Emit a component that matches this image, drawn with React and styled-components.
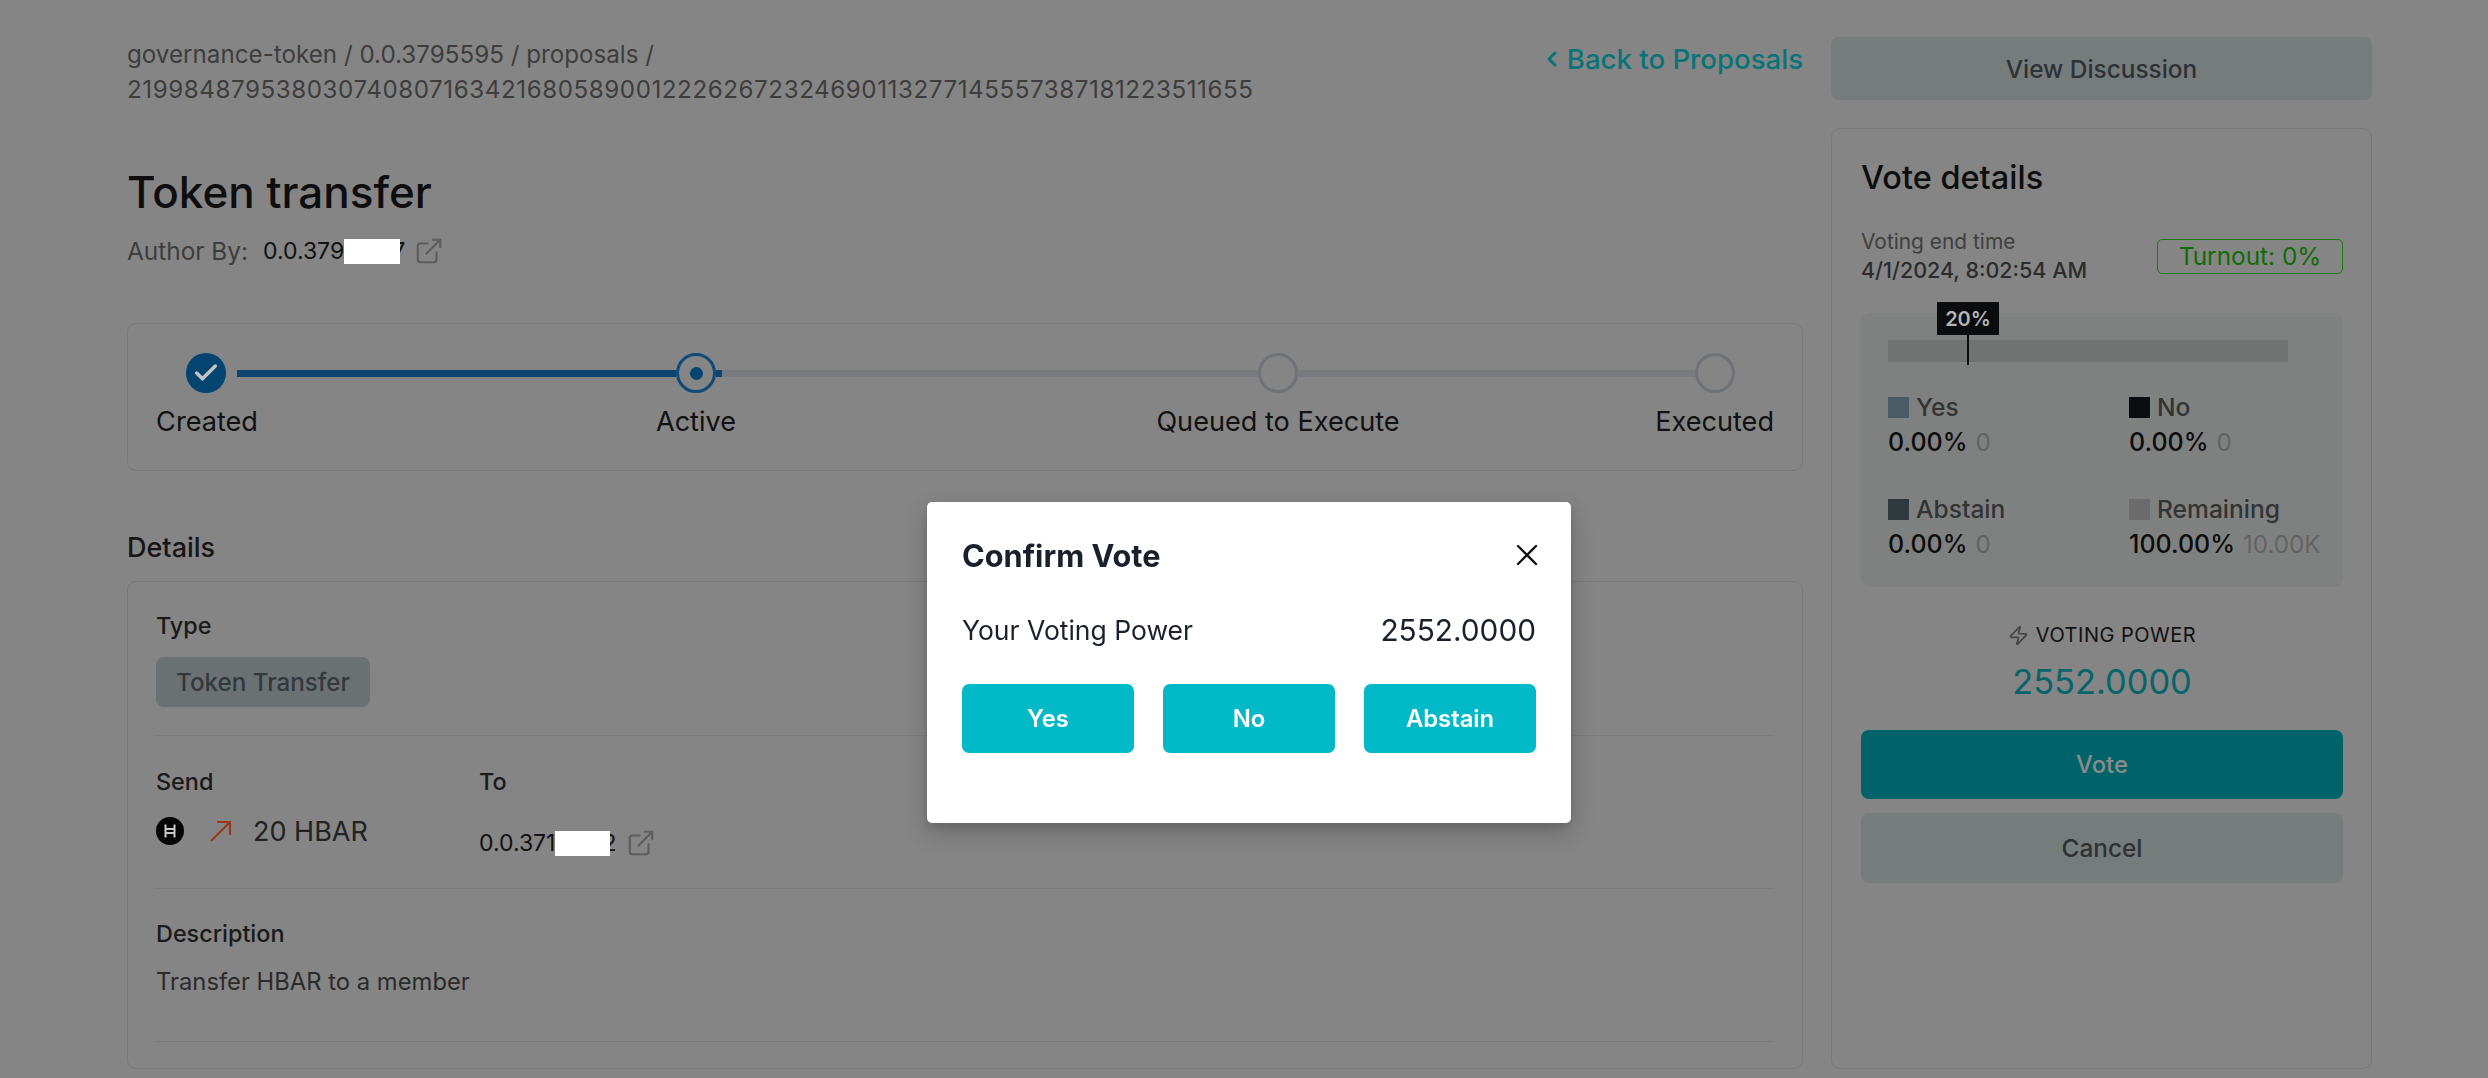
import React from 'react'
import styled, { createGlobalStyle } from 'styled-components'
import { ChevronLeft, ExternalLink, Zap, X, Check } from 'lucide-react'

const GlobalStyle = createGlobalStyle`
  * { box-sizing: border-box; }
  html, body { margin: 0; padding: 0; height: 100%; overflow: hidden; }
  body { background: #858585; font-family: Inter, "Liberation Sans", sans-serif; color: #111; }
`

const Page = styled.div`
  display: flex;
  align-items: flex-start;
  gap: 28px;
  width: 2488px;
  height: 1078px;
  padding: 37px 116px 0 127px;
  overflow: hidden;
`
const Main = styled.main`
  width: 1676px;
  flex: none;
`
const Side = styled.aside`
  width: 541px;
  flex: none;
`
const TopRow = styled.div`
  display: flex;
  justify-content: space-between;
  align-items: flex-start;
`
const Breadcrumb = styled.div`
  width: 1300px;
  font-size: 24.2px;
  line-height: 35px;
  color: #3d3d3d;
  word-break: break-word;
`
const ProposalId = styled.span`
  letter-spacing: 0.55px;
`
const BackLink = styled.a`
  display: flex;
  align-items: center;
  gap: 3px;
  height: 44px;
  font-size: 27.6px;
  font-weight: 500;
  color: #08747a;
`
const Title = styled.h1`
  margin: 57px 0 0;
  font-size: 44px;
  font-weight: 500;
  line-height: 56px;
  color: #0e0e0e;
`
const AuthorRow = styled.div`
  display: flex;
  align-items: center;
  margin-top: 16px;
  height: 30px;
  font-size: 24.4px;
  color: #3d3d3d;
`
const Address = styled.span`
  display: inline-flex;
  align-items: center;
  font-size: 23px;
  color: #111;
  margin-left: ${p => p.$gap || 0}px;
`
const Redacted = styled.span`
  display: inline-block;
  width: ${p => p.$w}px;
  height: 25px;
  margin-right: -8px;
  background: #fff;
  position: relative;
`
const LinkIcon = styled(ExternalLink)`
  margin-left: 9px;
  color: #5d5d5d;
`

const Stepper = styled.section`
  margin-top: 57px;
  height: 148px;
  padding: 29px 28px 0;
  border: 1px solid #797979;
  border-radius: 9px;
`
const Track = styled.div`
  display: flex;
  align-items: center;
  height: 40px;
  padding-left: 30px;
`
const Done = styled.span`
  display: flex;
  align-items: center;
  justify-content: center;
  flex: none;
  width: 40px;
  height: 40px;
  border-radius: 50%;
  background: #034470;
  color: #c4c4c4;
`
const Node = styled.span`
  display: flex;
  align-items: center;
  justify-content: center;
  flex: none;
  width: 40px;
  height: 40px;
  border-radius: 50%;
  border: 3px solid ${p => (p.$active ? '#104a7a' : '#6f7277')};
  i {
    width: 13px;
    height: 13px;
    border-radius: 50%;
    background: #034470;
  }
`
const Line = styled.span`
  flex: none;
  width: ${p => p.$w}px;
  height: 7px;
  margin-left: ${p => p.$ml || 0}px;
  background: ${p => (p.$on ? '#104470' : '#797b81')};
`
const StepLabels = styled.div`
  display: grid;
  grid-template-columns: 102px 876px 288px 1fr;
  margin-top: 14px;
  font-size: 27.1px;
  line-height: 30px;
  color: #111;
  text-align: center;
  span:last-child { text-align: right; }
`
const SectionTitle = styled.h2`
  margin: 60px 0 16px;
  font-size: 27px;
  font-weight: 500;
  line-height: 34px;
  color: #161616;
`
const Card = styled.section`
  height: 488px;
  padding: 29px 28px 0;
  border: 1px solid #797979;
  border-radius: 9px;
`
const FieldLabel = styled.div`
  font-size: 23.4px;
  font-weight: 500;
  line-height: 30px;
  color: #1a1a1a;
`
const Pill = styled.div`
  display: inline-flex;
  align-items: center;
  justify-content: center;
  width: 214px;
  height: 50px;
  margin-top: 16px;
  border-radius: 8px;
  background: #6b7172;
  font-size: 24.2px;
  font-weight: 500;
  color: #33383c;
`
const Divider = styled.hr`
  margin: ${p => p.$top}px 0 ${p => p.$bottom}px;
  border: 0;
  border-top: 1px solid #7b7b7b;
`
const TransferRow = styled.div`
  display: grid;
  grid-template-columns: 323px 1fr;
`
const SendValue = styled.div`
  display: flex;
  align-items: center;
  height: 34px;
  margin-top: 17px;
  font-size: 27px;
  color: #222;
`
const HbarIcon = styled.svg`
  flex: none;
`
const ArrowIcon = styled.svg`
  margin: 0 21px 0 26px;
`
const ToValue = styled.div`
  display: flex;
  align-items: center;
  height: 30px;
  margin-top: 31px;
  font-size: 23px;
  color: #111;
`
const BodyText = styled.p`
  margin: 18px 0 0;
  font-size: 23.8px;
  line-height: 30px;
  color: #2b2b2b;
`

const GhostButton = styled.button`
  display: block;
  width: 100%;
  height: ${p => p.$h}px;
  border: 0;
  border-radius: 8px;
  background: #767b7b;
  font-family: inherit;
  font-size: 24.4px;
  font-weight: 500;
  color: #2d3237;
`
const VoteCard = styled.section`
  height: 941px;
  margin-top: 28px;
  padding: 29px 28px 0 29px;
  border: 1px solid #797979;
  border-radius: 9px;
`
const VoteTitle = styled.h2`
  margin: 0;
  font-size: 32.5px;
  font-weight: 500;
  line-height: 40px;
  color: #0e0e0e;
`
const TimeRow = styled.div`
  display: flex;
  justify-content: space-between;
  align-items: center;
  margin-top: 30px;
`
const TimeCaption = styled.div`
  font-size: 20.9px;
  line-height: 28px;
  color: #3f3f3f;
`
const TimeValue = styled(TimeCaption)`
  font-size: 21.5px;
  font-weight: 500;
  color: #2c2c2c;
`
const Turnout = styled.div`
  display: flex;
  align-items: center;
  justify-content: center;
  width: 186px;
  height: 35px;
  border: 1px solid #1c7a10;
  border-radius: 5px;
  font-size: 24.4px;
  color: #0f6c03;
`
const StatsBox = styled.div`
  position: relative;
  height: 274px;
  margin-top: 29px;
  padding: 27px 27px 0;
  border-radius: 9px;
  background: #7f8180;
`
const Bar = styled.div`
  width: 400px;
  height: 22px;
  background: #707372;
`
const Marker = styled.div`
  position: absolute;
  left: 76px;
  top: -11px;
  width: 62px;
  height: 33px;
  display: flex;
  align-items: center;
  justify-content: center;
  background: #0a0c0d;
  font-size: 20px;
  font-weight: 600;
  color: #b5b5b5;
  &::after {
    content: '';
    position: absolute;
    left: 30px;
    top: 33px;
    width: 2px;
    height: 30px;
    background: #0a0c0d;
  }
`
const Legend = styled.div`
  display: grid;
  grid-template-columns: 241px 1fr;
  row-gap: 36px;
  margin-top: 30px;
`
const LegendLabel = styled.div`
  display: flex;
  align-items: center;
  gap: 7px;
  font-size: 24.6px;
  font-weight: 500;
  line-height: 30px;
  color: #333;
`
const Swatch = styled.span`
  width: 21px;
  height: 21px;
  background: ${p => p.$color};
`
const LegendValue = styled.div`
  margin-top: 5px;
  font-size: 25px;
  font-weight: 500;
  line-height: 30px;
  color: #0c0c0c;
  small {
    margin-left: 8px;
    font-size: 24.2px;
    font-weight: 400;
    color: #636363;
  }
`
const PowerLabel = styled.div`
  display: flex;
  align-items: center;
  justify-content: center;
  gap: 7px;
  margin-top: 33px;
  font-size: 20px;
  line-height: 30px;
  letter-spacing: 0.5px;
  color: #111;
  svg { color: #454545; }
`
const PowerValue = styled.div`
  margin: 10px 0 26px;
  font-size: 34.4px;
  line-height: 44px;
  text-align: center;
  color: #06646a;
`
const VoteButton = styled.button`
  display: block;
  width: 100%;
  height: 69px;
  margin-bottom: 14px;
  border: 0;
  border-radius: 8px;
  background: #006369;
  font-family: inherit;
  font-size: 23.8px;
  font-weight: 500;
  color: #8b8b8b;
`

const Backdrop = styled.div`
  position: fixed;
  inset: 0;
  display: flex;
  justify-content: center;
  align-items: flex-start;
  padding: 502px 0 0 10px;
`
const Modal = styled.div`
  width: 644px;
  height: 321px;
  padding: 33px 35px 0 35px;
  border-radius: 5px;
  background: #fff;
  box-shadow: 0 10px 24px rgba(0, 0, 0, 0.2), 0 4px 8px rgba(0, 0, 0, 0.1);
`
const ModalHeader = styled.div`
  display: flex;
  justify-content: space-between;
  align-items: center;
  height: 40px;
  font-size: 30.7px;
  font-weight: 700;
  color: #1a202c;
`
const CloseIcon = styled(X)`
  margin-right: -9px;
  color: #111;
`
const PowerRow = styled.div`
  display: flex;
  justify-content: space-between;
  align-items: center;
  height: 36px;
  margin-top: 37px;
  font-size: 26.5px;
  color: #1a202c;
  span:last-child { font-size: 29.8px; }
`
const ChoiceRow = styled.div`
  display: grid;
  grid-template-columns: repeat(3, 172px);
  justify-content: space-between;
  margin-top: 36px;
`
const ChoiceButton = styled.button`
  height: 69px;
  border: 0;
  border-radius: 7px;
  background: #02b9c8;
  font-family: inherit;
  font-size: 23.8px;
  font-weight: 600;
  color: #fff;
`

const legend = [
  { name: 'Yes', color: '#4a5b66', pct: '0.00%', count: '0' },
  { name: 'No', color: '#0b0e10', pct: '0.00%', count: '0' },
  { name: 'Abstain', color: '#2e383d', pct: '0.00%', count: '0' },
  { name: 'Remaining', color: '#6b6b6b', pct: '100.00%', count: '10.00K' },
]

function HbarLogo() {
  return (
    <HbarIcon width="28" height="28" viewBox="0 0 28 28">
      <circle cx="14" cy="14" r="14" fill="#050505" />
      <path d="M9.5 7.5v13M18.5 7.5v13M9.5 12h9M9.5 16h9" stroke="#c9c9c9" strokeWidth="2" fill="none" />
    </HbarIcon>
  )
}

export default function App() {
  return (
    <>
      <GlobalStyle />
      <Page>
        <Main>
          <TopRow>
            <Breadcrumb>
              governance-token / 0.0.3795595 / proposals /<br />
              <ProposalId>21998487953803074080716342168058900122262672324690113277145557387181223511655</ProposalId>
            </Breadcrumb>
            <BackLink>
              <ChevronLeft size={24} strokeWidth={3} />
              Back to Proposals
            </BackLink>
          </TopRow>
          <Title>Token transfer</Title>
          <AuthorRow>
            Author By:
            <Address $gap={15}>
              0.0.379
              <Redacted $w={56} />
              7
            </Address>
            <LinkIcon size={30} strokeWidth={1.7} />
          </AuthorRow>

          <Stepper>
            <Track>
              <Done><Check size={28} strokeWidth={3} /></Done>
              <Line $on $w={439} $ml={11} />
              <Node $active><i /></Node>
              <Line $on $w={6} />
              <Line $w={536} />
              <Node />
              <Line $w={397} />
              <Node />
            </Track>
            <StepLabels>
              <span>Created</span>
              <span>Active</span>
              <span>Queued to Execute</span>
              <span>Executed</span>
            </StepLabels>
          </Stepper>

          <SectionTitle>Details</SectionTitle>
          <Card>
            <FieldLabel>Type</FieldLabel>
            <Pill>Token Transfer</Pill>
            <Divider $top={28} $bottom={31} />
            <TransferRow>
              <div>
                <FieldLabel>Send</FieldLabel>
                <SendValue>
                  <HbarLogo />
                  <ArrowIcon width="22" height="22" viewBox="0 0 22 22" fill="none" stroke="#98391f" strokeWidth="2.2">
                    <path d="M1 21 20 2M7 2h13v13" />
                  </ArrowIcon>
                  20 HBAR
                </SendValue>
              </div>
              <div>
                <FieldLabel>To</FieldLabel>
                <ToValue>
                  0.0.371
                  <Redacted $w={55} />
                  2
                  <LinkIcon size={30} strokeWidth={1.7} />
                </ToValue>
              </div>
            </TransferRow>
            <Divider $top={30} $bottom={30} />
            <FieldLabel>Description</FieldLabel>
            <BodyText>Transfer HBAR to a member</BodyText>
            <Divider $top={44} $bottom={0} />
          </Card>
        </Main>

        <Side>
          <GhostButton $h={63}>View Discussion</GhostButton>
          <VoteCard>
            <VoteTitle>Vote details</VoteTitle>
            <TimeRow>
              <div>
                <TimeCaption>Voting end time</TimeCaption>
                <TimeValue>4/1/2024, 8:02:54 AM</TimeValue>
              </div>
              <Turnout>Turnout: 0%</Turnout>
            </TimeRow>
            <StatsBox>
              <Bar />
              <Marker>20%</Marker>
              <Legend>
                {legend.map(item => (
                  <div key={item.name}>
                    <LegendLabel>
                      <Swatch $color={item.color} />
                      {item.name}
                    </LegendLabel>
                    <LegendValue>
                      {item.pct}
                      <small>{item.count}</small>
                    </LegendValue>
                  </div>
                ))}
              </Legend>
            </StatsBox>
            <PowerLabel>
              <Zap size={21} strokeWidth={2} />
              VOTING POWER
            </PowerLabel>
            <PowerValue>2552.0000</PowerValue>
            <VoteButton>Vote</VoteButton>
            <GhostButton $h={70}>Cancel</GhostButton>
          </VoteCard>
        </Side>
      </Page>

      <Backdrop>
        <Modal>
          <ModalHeader>
            Confirm Vote
            <CloseIcon size={36} strokeWidth={1.6} />
          </ModalHeader>
          <PowerRow>
            <span>Your Voting Power</span>
            <span>2552.0000</span>
          </PowerRow>
          <ChoiceRow>
            <ChoiceButton>Yes</ChoiceButton>
            <ChoiceButton>No</ChoiceButton>
            <ChoiceButton>Abstain</ChoiceButton>
          </ChoiceRow>
        </Modal>
      </Backdrop>
    </>
  )
}
